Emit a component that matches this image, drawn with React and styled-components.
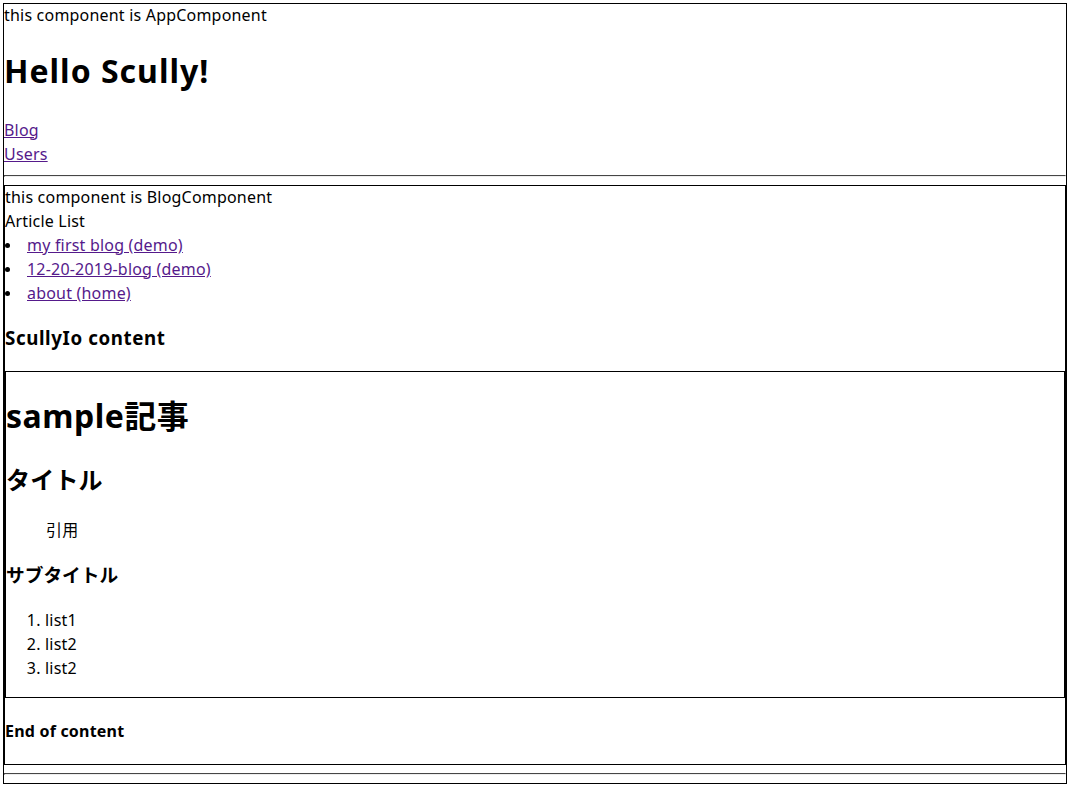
import React from 'react';
import styled, { createGlobalStyle } from 'styled-components';

const GlobalStyle = createGlobalStyle`
  body {
    margin: 3px 7px 3px 3px;
    font-family: "Noto Sans", "Noto Sans CJK JP", sans-serif;
    font-size: 16px;
    line-height: 1.5;
    letter-spacing: 0.2px;
    color: #000;
    background: #fff;
  }
`;

const Frame = styled.div`
  border: 1px solid #000;
`;

const Line = styled.div`
  margin: 0;
  transform: translateY(-1px);
`;

const Heading1 = styled.h1`
  font-size: 32px;
  font-weight: bold;
  margin: 21.44px 0;
  letter-spacing: ${(p) => (p.$wide ? '1px' : '0.5px')};
  transform: translateY(-2px);
`;

const Heading2 = styled.h2`
  font-size: 24px;
  font-weight: bold;
  margin: 19.92px 0;
  transform: translateY(-1px);
`;

const Heading3 = styled.h3`
  font-size: 18.72px;
  font-weight: bold;
  margin: 18.72px 0;
  letter-spacing: ${(p) => (p.$wide ? '0.6px' : '0')};
  transform: translateY(-1px);
`;

const Heading4 = styled.h4`
  font-size: 16px;
  font-weight: bold;
  margin: 21.28px 0;
`;

const NavLink = styled.a`
  display: block;
  color: #551a8b;
  text-decoration: underline;
  transform: translateY(-1px);
`;

const Rule = styled.hr`
  margin: 8px 0;
  height: 0;
  border-style: inset;
  border-width: 1px;
  border-color: #9a9a9a #eeeeee #eeeeee #9a9a9a;
`;

const ArticleList = styled.ul`
  list-style: none;
  margin: 0;
  padding: 0;
`;

const ArticleItem = styled.li`
  display: flex;
  align-items: center;

  &::before {
    content: '';
    width: 5px;
    height: 5px;
    border-radius: 50%;
    background: #000;
    margin: 0 17px 0 0;
    flex: none;
  }
`;

const Quote = styled.blockquote`
  margin: 16px 40px;
  transform: translateY(-1px);
`;

const NumberList = styled.ol`
  margin: 16px 0;
  padding-left: 39px;
  transform: translateY(-1px);
`;

const articles = [
  'my first blog (demo)',
  '12-20-2019-blog (demo)',
  'about (home)',
];

export default function App() {
  return (
    <>
      <GlobalStyle />
      <Frame>
        <Line>this component is AppComponent</Line>
        <Heading1 $wide>Hello Scully!</Heading1>
        <NavLink href="#">Blog</NavLink>
        <NavLink href="#">Users</NavLink>
        <Rule />
        <Frame>
          <Line>this component is BlogComponent</Line>
          <Line>Article List</Line>
          <ArticleList>
            {articles.map((title) => (
              <ArticleItem key={title}>
                <NavLink href="#">{title}</NavLink>
              </ArticleItem>
            ))}
          </ArticleList>
          <Heading3 $wide>ScullyIo content</Heading3>
          <Frame>
            <Heading1>sample記事</Heading1>
            <Heading2>タイトル</Heading2>
            <Quote>引用</Quote>
            <Heading3>サブタイトル</Heading3>
            <NumberList>
              <li>list1</li>
              <li>list2</li>
              <li>list2</li>
            </NumberList>
          </Frame>
          <Heading4>End of content</Heading4>
        </Frame>
        <Rule />
      </Frame>
    </>
  );
}
